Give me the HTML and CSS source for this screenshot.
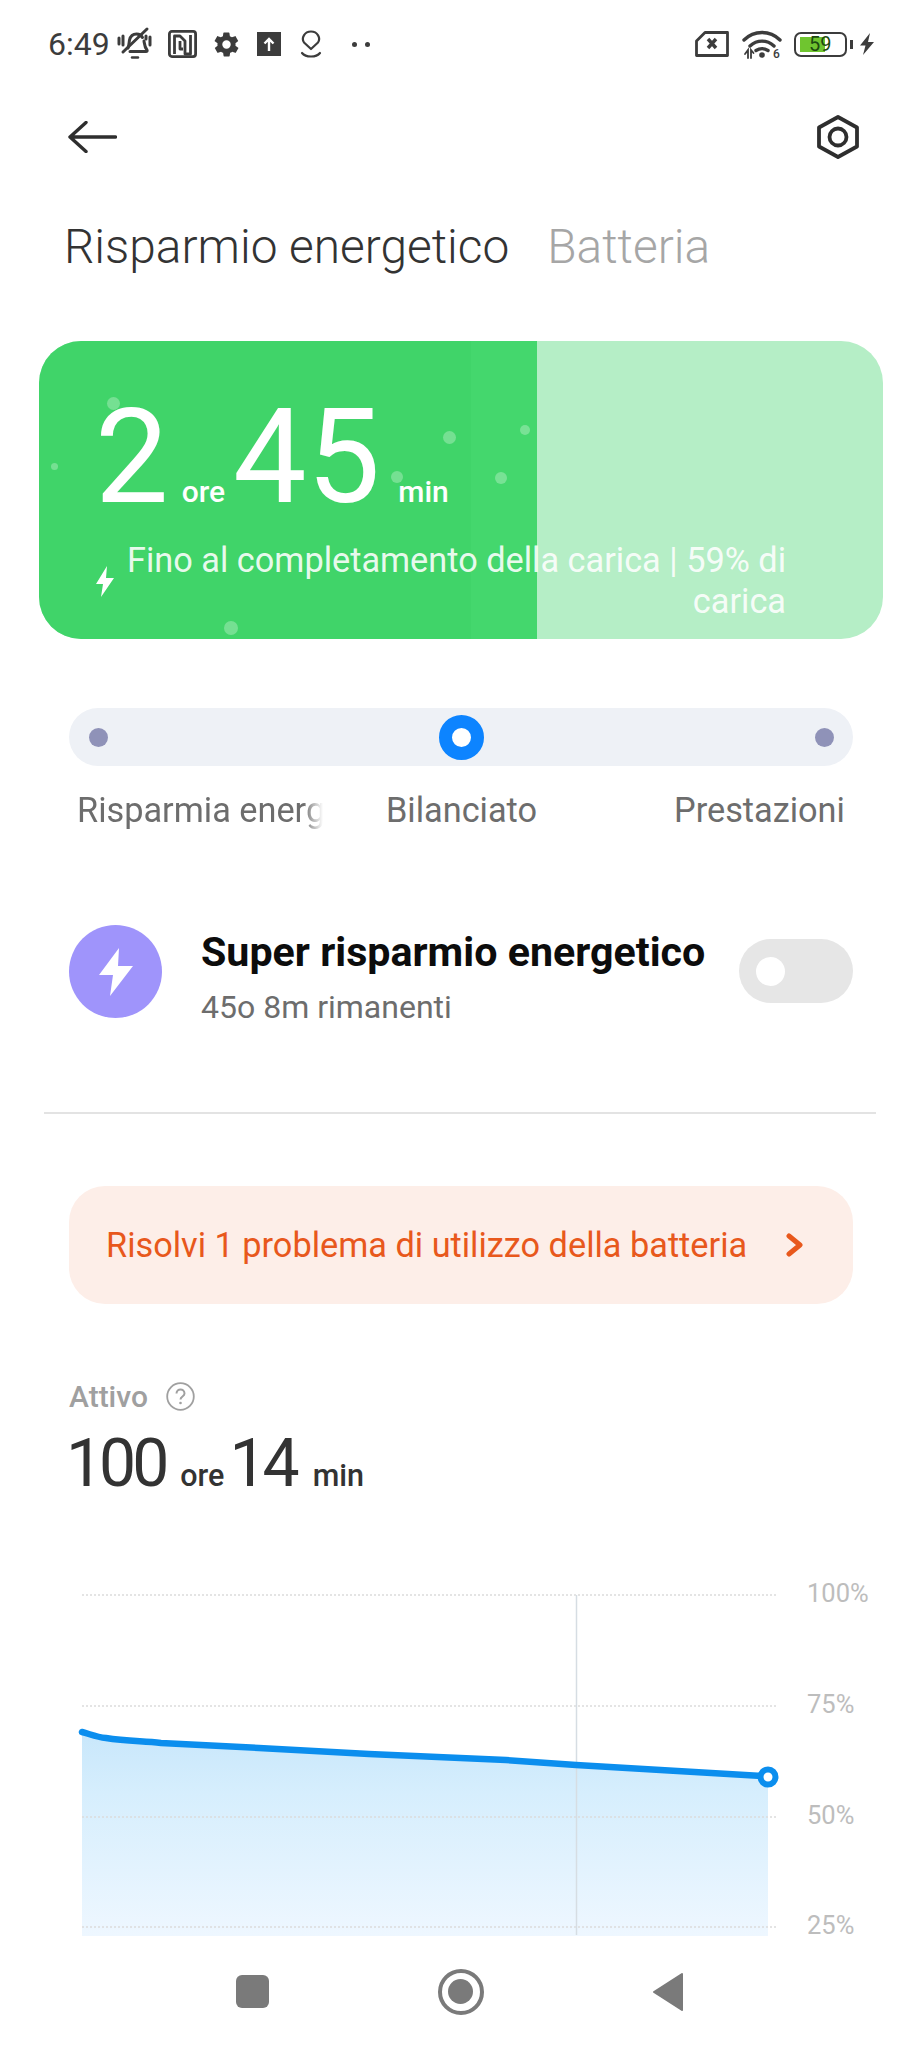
FILE: index.html
```html
<!DOCTYPE html>
<html lang="it">
<head>
<meta charset="utf-8">
<title>Batteria</title>
<link rel="stylesheet" href="styles.css">
</head>
<body>
<div class="screen">
  <div class="status">
    <span class="time">6:49</span>
    <svg class="i-bell" viewBox="0 0 38 32" fill="none" stroke="#3c3c3c" stroke-width="3" stroke-linecap="round" stroke-linejoin="round"><path d="M12 20c1-2 1-5 1.500-8 1-4 4-6 7-6 3 0 5 1.500 6 3.500M28 13c.5 3 .5 6 3 9 .5 1 0 1.500-1 1.500H14"/><path d="M7 24 31 1"/><path d="M3 10v6M7 8v9M34 9v8M30 8v3"/><path d="M16 29.500h6" stroke-width="2.400"/></svg>
    <svg class="i-nfc" viewBox="0 0 29 28" fill="none" stroke="#3c3c3c" stroke-width="2.800" stroke-linejoin="round"><rect x="1.400" y="1.400" width="26.200" height="25.200" rx="2.500"/><path d="M6.500 24V6h5.500l5 5v13h5.500V5"/><path d="M12 11v8h3"/></svg>
    <svg class="i-gear" viewBox="0 0 24 24"><path fill="#3c3c3c" fill-rule="evenodd" d="M19.400 13c.1-.3.100-.7.100-1s0-.7-.1-1l2.100-1.600c.2-.2.200-.4.100-.6l-2-3.500c-.1-.2-.4-.3-.6-.2l-2.500 1c-.5-.4-1.100-.7-1.700-1l-.4-2.700c0-.2-.2-.4-.5-.4h-4c-.3 0-.5.200-.5.400l-.4 2.700c-.6.200-1.200.6-1.700 1l-2.500-1c-.2-.1-.5 0-.6.200l-2 3.500c-.1.200-.1.400.1.600L4.600 11c0 .3-.1.700-.1 1s0 .7.1 1l-2.100 1.600c-.2.200-.2.400-.1.600l2 3.500c.1.200.4.300.6.200l2.500-1c.5.400 1.100.7 1.700 1l.4 2.700c0 .2.200.4.500.4h4c.3 0 .5-.2.500-.4l.4-2.700c.6-.2 1.200-.6 1.700-1l2.500 1c.2.100.5 0 .6-.2l2-3.500c.1-.2.100-.4-.1-.6zM12 15.500a3.500 3.500 0 1 1 0-7 3.500 3.500 0 0 1 0 7z"/></svg>
    <svg class="i-up" viewBox="0 0 24 24"><rect width="24" height="24" fill="#3c3c3c"/><path d="M12 19V7M7.500 11.500 12 7l4.500 4.500" fill="none" stroke="#fff" stroke-width="2.400"/></svg>
    <svg class="i-loc" viewBox="0 0 22 28" fill="none" stroke="#3c3c3c" stroke-width="2.200" stroke-linecap="round" stroke-linejoin="round"><path d="M11 19 4 12.500C1 8 4.500 1.500 11 1.500S21 8 18 12.500z"/><path d="M2 23c2 2.500 5 3.500 9 3.500s7-1 9-3.500"/></svg>
    <span class="dots"><i></i><i></i></span>
    <span class="spring"></span>
    <svg class="i-sim" viewBox="0 0 34 26" fill="none" stroke="#3c3c3c" stroke-width="2.800" stroke-linejoin="round"><path d="M10 1.500h22.500v23h-31V10z"/><path d="M13 8l8 9M21 8l-8 9" stroke-width="3.400"/></svg>
    <svg class="i-wifi" viewBox="0 0 40 30" fill="none" stroke="#3c3c3c" stroke-linecap="round"><path d="M2 11C12 1 28 1 38 11" stroke-width="3.400"/><path d="M8 17c7-6.500 17-6.500 24 0" stroke-width="3.400"/><path d="M14 21.500c4-2.500 8-2.500 12 0" stroke-width="3.400"/><circle cx="20" cy="26" r="2.800" fill="#3c3c3c" stroke="none"/><path d="M3 25l3-4v8M9 29v-8l2.500 3" stroke-width="1.800"/><text class="wifi-six" x="31" y="29">6</text></svg>
    <div class="battery"><div class="battery-fill"></div><span class="battery-num">59</span></div>
    <span class="battery-tip"></span>
    <svg class="i-bolt" viewBox="0 0 16 22"><path fill="#3c3c3c" d="M11 0 1 12.500h5.500L4 22l11-13H9z"/></svg>
  </div>

  <div class="header">
    <svg class="i-back" viewBox="0 0 49 32" fill="none" stroke="#2e2e2e" stroke-width="3.400" stroke-linecap="round" stroke-linejoin="round"><path d="M47.500 16H2M18 1.500 2 16l16 14.500"/></svg>
    <svg class="i-hex" viewBox="0 0 42 44" fill="none" stroke="#2e2e2e"><path d="M21 2 40 12.500v19L21 42 2 31.500v-19z" stroke-width="3.800" stroke-linejoin="round"/><circle cx="21" cy="22" r="8.500" stroke-width="3.800"/></svg>
  </div>

  <div class="tabs">
    <span class="tab-on">Risparmio energetico</span>
    <span class="tab-off">Batteria</span>
  </div>

  <div class="card">
    <div class="card-fill"></div>
    <i class="spark s1"></i><i class="spark s2"></i><i class="spark s3"></i><i class="spark s4"></i><i class="spark s5"></i><i class="spark s6"></i><i class="spark s7"></i>
    <div class="card-time">
      <span class="big">2</span><span class="unit u-ore">ore</span><span class="big b-45">45</span><span class="unit u-min">min</span>
    </div>
    <div class="card-sub">
      <svg class="i-cardbolt" viewBox="0 0 20 31"><path fill="#fff" d="M12 0 1 18h7L6 31 19 12h-8z"/></svg>
      <p class="card-text">Fino al completamento della carica | 59% di carica</p>
    </div>
  </div>

  <div class="slider">
    <i class="dot"></i>
    <i class="knob"></i>
    <i class="dot"></i>
  </div>
  <div class="modes">
    <span class="mode-a">Risparmia energetico</span>
    <span class="mode-b">Bilanciato</span>
    <span class="mode-c">Prestazioni</span>
  </div>

  <div class="saver">
    <div class="saver-icon">
      <svg viewBox="0 0 38 50"><path fill="#fff" d="M22 1 2 28h14l-3 21 23-30H21z"/></svg>
    </div>
    <div class="saver-body">
      <div class="saver-title">Super risparmio energetico</div>
      <div class="saver-sub">45o 8m rimanenti</div>
    </div>
    <div class="toggle"><i></i></div>
  </div>

  <div class="divider"></div>

  <div class="issue">
    <span>Risolvi 1 problema di utilizzo della batteria</span>
    <svg viewBox="0 0 18 24" fill="none" stroke="#e8581c" stroke-width="5" stroke-linecap="round" stroke-linejoin="round"><path d="M3 3l11 9-11 9"/></svg>
  </div>

  <div class="active-label">
    <span>Attivo</span>
    <svg viewBox="0 0 29 29" fill="none" stroke="#a0a0a0" stroke-width="1.800"><circle cx="14.500" cy="14.500" r="13.300"/><path d="M10.500 11.500c0-5.500 8-5.500 8 0 0 3-4 3-4 6" stroke-width="2"/><circle cx="14.500" cy="21" r="1.300" fill="#a0a0a0" stroke="none"/></svg>
  </div>
  <div class="active-time">
    <span class="num">100</span><span class="lab l-ore">ore</span><span class="num">14</span><span class="lab l-min">min</span>
  </div>

  <svg class="chart" viewBox="0 0 922 371">
    <defs>
      <linearGradient id="area" x1="0" y1="0" x2="0" y2="1">
        <stop offset="0" stop-color="#c8e7fb"/>
        <stop offset="0.3" stop-color="#d6eefd"/>
        <stop offset="1" stop-color="#eef7ff"/>
      </linearGradient>
    </defs>
    <path class="area" d="M82 161 106 167 161 171 259 176 369 182 506 188 576 193 768 206V365H82Z"/>
    <g class="grid">
      <path d="M82 24H778"/><path d="M82 135H778"/><path d="M82 246H778"/><path d="M82 356H778"/>
    </g>
    <path class="vline" d="M576.500 24V364"/>
    <path class="curve" d="M82 161C90 163 96 166 106 167 125 170 140 170 161 172L259 177 369 183 506 189 576 194 762 205"/>
    <circle class="end" cx="768" cy="206" r="7.500"/>
    <text class="pct" x="807" y="31">100%</text>
    <text class="pct" x="807" y="142">75%</text>
    <text class="pct" x="807" y="253">50%</text>
    <text class="pct" x="807" y="363">25%</text>
  </svg>

  <div class="nav">
    <i class="nav-square"></i>
    <i class="nav-circle"><b></b></i>
    <svg class="nav-back" viewBox="0 0 32 40"><path fill="#7a7a7a" stroke="#7a7a7a" stroke-width="2" stroke-linejoin="round" d="M30 2 2 20l28 18z"/></svg>
  </div>
</div>
</body>
</html>
```
FILE: styles.css
```css
* { box-sizing: border-box; }
html, body { margin: 0; padding: 0; background: #fff; }
body { font-family: Roboto, "Liberation Sans", sans-serif; color: #333; }
.screen { width: 922px; height: 2048px; overflow: hidden; display: flex; flex-direction: column; background: #fff; }
i { display: block; }

/* status bar */
.status { height: 88px; flex: none; display: flex; align-items: center; padding: 0 47px 0 48px; }
.time { font-size: 32px; color: #3c3c3c; width: 68px; line-height: 88px; }
.status svg { display: block; flex: none; overflow: visible; }
.i-bell { width: 38px; height: 32px; margin-right: 14px; }
.i-nfc { width: 29px; height: 28px; margin-right: 15px; }
.i-gear { width: 29px; height: 29px; margin-right: 16px; }
.i-up { width: 24px; height: 24px; margin-right: 19px; }
.i-loc { width: 22px; height: 28px; margin-right: 30px; }
.dots { display: flex; gap: 8px; }
.dots i { width: 5px; height: 5px; border-radius: 50%; background: #3c3c3c; }
.spring { flex: 1; }
.i-sim { width: 34px; height: 26px; margin-right: 13px; }
.i-wifi { width: 40px; height: 30px; margin-right: 12px; }
.wifi-six { font-size: 12px; font-weight: 500; fill: #3c3c3c; stroke: none; }
.battery { position: relative; width: 53px; height: 25px; border: 2.500px solid #3c3c3c; border-radius: 7px; padding: 3px 4px; }
.battery-fill { width: 25px; height: 100%; background: #6fc52f; }
.battery-num { position: absolute; left: 13px; top: -2px; font-size: 20px; line-height: 24px; color: #1d4a10; }
.battery-tip { width: 3px; height: 9px; margin: 0 6px 0 3px; background: #3c3c3c; }
.i-bolt { width: 16px; height: 22px; }

/* header */
.header { height: 98px; flex: none; display: flex; align-items: center; justify-content: space-between; padding: 0 63px 0 68px; }
.i-back { width: 49px; height: 32px; display: block; }
.i-hex { width: 42px; height: 44px; display: block; }

/* tabs */
.tabs { flex: none; height: 56px; margin-top: 33px; padding-left: 64px; display: flex; gap: 38px; font-size: 47.800px; line-height: 56px; font-weight: 300; }
.tab-on { color: #333; }
.tab-off { color: #a6a6a6; }

/* green card */
.card { position: relative; flex: none; margin: 66px 39px 0; height: 298px; border-radius: 42px; background: #b5eec6; overflow: hidden; }
.card-fill { position: absolute; left: 0; top: 0; bottom: 0; width: 498px; background: linear-gradient(90deg, #40d469 0, #40d469 432px, #44d76d 432px, #44d76d 100%); }
.spark { position: absolute; border-radius: 50%; background: rgba(255,255,255,.28); }
.s1 { left: 68px; top: 56px; width: 13px; height: 13px; }
.s2 { left: 12px; top: 122px; width: 7px; height: 7px; }
.s3 { left: 404px; top: 90px; width: 13px; height: 13px; }
.s4 { left: 481px; top: 84px; width: 10px; height: 10px; }
.s5 { left: 352px; top: 130px; width: 12px; height: 12px; }
.s6 { left: 456px; top: 131px; width: 12px; height: 12px; }
.s7 { left: 185px; top: 280px; width: 14px; height: 14px; }
.card-time { position: relative; display: flex; align-items: baseline; padding: 48px 0 0 56px; color: #fff; height: 183px; }
.big { font-size: 131px; line-height: 136px; font-weight: 400; }
.b-45 { margin-left: 8px; }
.unit { font-size: 30px; font-weight: 500; line-height: 30px; }
.u-ore { margin-left: 13px; }
.u-min { margin-left: 18px; }
.card-sub { position: relative; display: flex; align-items: flex-start; padding-left: 56px; color: #fff; }
.i-cardbolt { width: 20px; height: 31px; display: block; margin-top: 42px; flex: none; }
.card-text { width: 662px; margin: 16px 0 0 9px; font-size: 34.300px; line-height: 40.500px; text-align: right; color: rgba(255,255,255,.9); }

/* slider */
.slider { flex: none; margin: 69px 69px 0; height: 58px; border-radius: 29px; background: #eef1f6; display: flex; align-items: center; justify-content: space-between; padding: 0 19px 0 20px; }
.dot { width: 19px; height: 19px; border-radius: 50%; background: #8f92b8; }
.knob { width: 45px; height: 45px; border-radius: 50%; border: 13px solid #0d84ff; background: #fff; }
.modes { flex: none; position: relative; height: 44px; margin-top: 22px; font-size: 34.300px; line-height: 44px; color: #6d6d6d; display: flex; padding-left: 77px; }
.mode-a { width: 246px; flex: none; white-space: nowrap; overflow: hidden; -webkit-mask-image: linear-gradient(90deg, #000 92%, transparent); mask-image: linear-gradient(90deg, #000 92%, transparent); }
.mode-b { margin-left: 63px; width: 222px; flex: none; }
.mode-c { margin-left: 66px; }

/* super saver */
.saver { flex: none; margin: 93px 69px 0; display: flex; align-items: flex-start; height: 93px; }
.saver-icon { width: 93px; height: 93px; border-radius: 50%; background: #9f94fb; display: flex; align-items: center; justify-content: center; flex: none; }
.saver-icon svg { width: 38px; height: 50px; display: block; }
.saver-body { flex: 1; margin-left: 39px; }
.saver-title { font-size: 41.200px; font-weight: 700; line-height: 46px; color: #0c0c0c; margin-top: 4px; white-space: nowrap; }
.saver-sub { font-size: 32px; line-height: 38px; color: #6d6d6d; margin-top: 13px; white-space: nowrap; }
.toggle { flex: none; width: 114px; height: 64px; margin-top: 14px; border-radius: 32px; background: #e6e6e6; display: flex; align-items: center; padding-left: 17px; }
.toggle i { width: 29px; height: 29px; border-radius: 50%; background: #fff; }

.divider { flex: none; height: 1.500px; margin: 94px 46px 0 44px; background: #e3e3e3; }

/* issue banner */
.issue { flex: none; margin: 72px 69px 0; height: 118px; border-radius: 36px; background: #fdeee8; display: flex; align-items: center; justify-content: space-between; padding: 0 49px 0 37px; font-size: 34.300px; color: #e8581c; white-space: nowrap; }
.issue svg { width: 18px; height: 24px; display: block; flex: none; }

/* active */
.active-label { flex: none; margin: 74px 0 0 69px; display: flex; align-items: center; gap: 18px; height: 38px; font-size: 30px; font-weight: 500; color: #a0a0a0; }
.active-label svg { width: 29px; height: 29px; display: block; }
.active-time { flex: none; display: flex; align-items: baseline; height: 70px; margin: 13px 0 0 66px; color: #333; }
.num { font-size: 66px; line-height: 70px; letter-spacing: -4px; }
.lab { font-size: 30.500px; font-weight: 500; line-height: 32px; }
.l-ore { margin: 0 5px 0 15px; }
.l-min { margin-left: 17px; }

/* chart */
.chart { flex: none; display: block; width: 922px; height: 371px; margin-top: 72px; }
.area { fill: url(#area); }
.grid path { stroke: #dcdcdc; stroke-width: 1.500; stroke-dasharray: 2 2; fill: none; }
.vline { stroke: #d6dde3; stroke-width: 1.500; fill: none; }
.curve { stroke: #0b8eee; stroke-width: 6.500; fill: none; stroke-linecap: round; stroke-linejoin: round; }
.end { stroke: #0b8eee; stroke-width: 6; fill: #fff; }
.pct { font-family: Roboto, "Liberation Sans", sans-serif; font-size: 25.500px; fill: #bdbdbd; }

/* nav */
.nav { flex: 1; position: relative; display: flex; align-items: center; padding: 0 238px 6px 236px; justify-content: space-between; }
.nav-square { width: 33px; height: 33px; border-radius: 6px; background: #7a7a7a; }
.nav-circle { width: 46px; height: 46px; border-radius: 50%; border: 4px solid #7a7a7a; display: flex; align-items: center; justify-content: center; }
.nav-circle b { display: block; width: 25px; height: 25px; border-radius: 50%; background: #7a7a7a; }
.nav-back { width: 32px; height: 40px; display: block; }
```
